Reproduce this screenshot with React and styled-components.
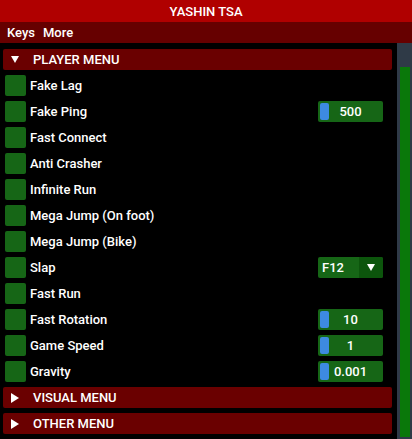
import React from "react";
import styled, { createGlobalStyle } from "styled-components";

const GlobalStyle = createGlobalStyle`
  html, body {
    margin: 0;
    padding: 0;
    background: #000;
  }
  body {
    font-family: Roboto, "Liberation Sans", sans-serif;
    font-size: 13px;
    color: #fff;
  }
`;

const items = [
  { label: "Fake Lag" },
  { label: "Fake Ping", slider: "500" },
  { label: "Fast Connect" },
  { label: "Anti Crasher" },
  { label: "Infinite Run" },
  { label: "Mega Jump (On foot)" },
  { label: "Mega Jump (Bike)" },
  { label: "Slap", combo: "F12" },
  { label: "Fast Run" },
  { label: "Fast Rotation", slider: "10" },
  { label: "Game Speed", slider: "1" },
  { label: "Gravity", slider: "0.001" },
];

function Arrow({ open }) {
  return open ? (
    <svg width="8" height="8" viewBox="0 0 8 8">
      <polygon points="0,0 8,0 4,7" fill="#fff" />
    </svg>
  ) : (
    <svg width="8" height="10" viewBox="0 0 8 10">
      <polygon points="0,0 8,5 0,10" fill="#fff" />
    </svg>
  );
}

function Section({ title, open }) {
  return (
    <Header>
      <ArrowSlot>
        <Arrow open={open} />
      </ArrowSlot>
      {title}
    </Header>
  );
}

function Row({ label, slider, combo }) {
  return (
    <RowStyled>
      <Checkbox />
      <Label>{label}</Label>
      {slider && (
        <Frame>
          <Grab />
          <Value>{slider}</Value>
        </Frame>
      )}
      {combo && (
        <Frame>
          <ComboText>{combo}</ComboText>
          <ComboButton>
            <Arrow open />
          </ComboButton>
        </Frame>
      )}
    </RowStyled>
  );
}

export default function App() {
  return (
    <>
      <GlobalStyle />
      <Window>
        <TitleBar>YASHIN TSA</TitleBar>
        <MenuBar>
          <span>Keys</span>
          <span>More</span>
        </MenuBar>
        <Body>
          <Content>
            <Section title="PLAYER MENU" open />
            {items.map((it) => (
              <Row key={it.label} {...it} />
            ))}
            <Section title="VISUAL MENU" />
            <Section title="OTHER MENU" />
          </Content>
          <Scrollbar>
            <ScrollGrab />
          </Scrollbar>
        </Body>
      </Window>
    </>
  );
}

const Window = styled.div`
  width: 412px;
  height: 439px;
  overflow: hidden;
  display: flex;
  flex-direction: column;
  background: #000;
`;

const TitleBar = styled.div`
  height: 22px;
  flex-shrink: 0;
  background: #b00000;
  display: flex;
  align-items: center;
  justify-content: center;
  font-weight: 500;
`;

const MenuBar = styled.div`
  height: 21px;
  flex-shrink: 0;
  background: #660000;
  display: flex;
  align-items: center;
  gap: 8px;
  padding-left: 7px;
  font-weight: 500;
`;

const Body = styled.div`
  flex: 1;
  min-height: 0;
  display: flex;
`;

const Content = styled.div`
  width: 389px;
  padding: 6px 0 0 3px;
  display: flex;
  flex-direction: column;
  gap: 5px;
  overflow: hidden;
`;

const Header = styled.div`
  height: 21px;
  flex-shrink: 0;
  background: #6a0000;
  border-radius: 2px;
  display: flex;
  align-items: center;
  font-weight: 500;
`;

const ArrowSlot = styled.span`
  width: 30px;
  padding-left: 8px;
  box-sizing: border-box;
  display: flex;
  align-items: center;
`;

const RowStyled = styled.div`
  height: 21px;
  flex-shrink: 0;
  display: flex;
  align-items: center;
  padding-left: 2px;
  padding-right: 9px;
`;

const Checkbox = styled.div`
  width: 21px;
  height: 21px;
  background: #166616;
  border-radius: 2px;
`;

const Label = styled.span`
  margin-left: 4px;
  font-weight: 500;
  flex: 1;
`;

const Frame = styled.div`
  position: relative;
  width: 65px;
  height: 21px;
  background: #166616;
  border-radius: 2px;
  display: flex;
  align-items: center;
  overflow: hidden;
`;

const Grab = styled.div`
  position: absolute;
  left: 2px;
  top: 2px;
  width: 9px;
  height: 17px;
  background: #3d8ae0;
  border-radius: 2px;
`;

const Value = styled.span`
  flex: 1;
  text-align: center;
  font-weight: 500;
`;

const ComboText = styled.span`
  flex: 1;
  padding-left: 4px;
  font-weight: 500;
`;

const ComboButton = styled.div`
  width: 24px;
  height: 100%;
  background: #0c550c;
  display: flex;
  align-items: center;
  justify-content: center;
`;

const Scrollbar = styled.div`
  width: 15px;
  margin-left: 5px;
  background: #2f3a47;
  padding: 24px 2px 2px 3px;
  box-sizing: border-box;
  display: flex;
`;

const ScrollGrab = styled.div`
  flex: 1;
  background: #0a780a;
`;
